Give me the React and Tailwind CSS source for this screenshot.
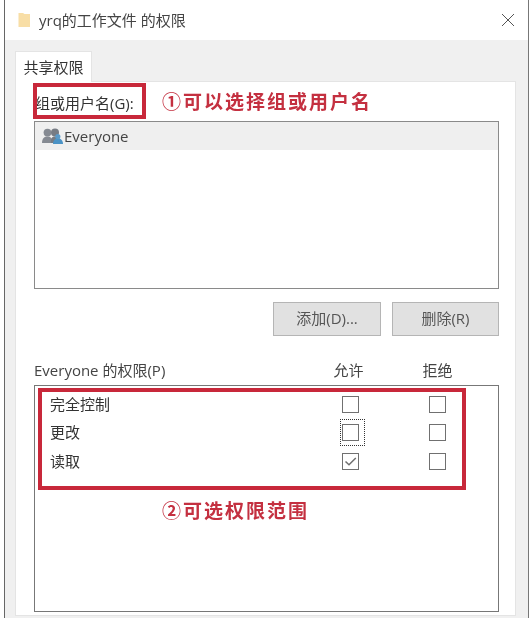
const font = { fontFamily: '"Open Sans", "Noto Sans CJK SC", sans-serif' };

function Box({ checked, focus }) {
  return (
    <div className="relative w-[17px] h-[17px] border border-[#707070] bg-white flex items-center justify-center">
      {focus && <div className="absolute left-[-3px] top-[-6px] w-[25px] h-[27px] border border-dotted border-[#333]" />}
      {checked && (
        <svg width="13" height="11" viewBox="0 0 13 11" fill="none">
          <path d="M1.5 5.5 L5 8.8 L11.8 2" stroke="#6f6f6f" strokeWidth="1.5" />
        </svg>
      )}
    </div>
  );
}

function Row({ label, allow, focus }) {
  return (
    <div className="h-[28.5px] flex items-center">
      <div className="w-[272px] pl-[15px] -mt-px text-[15px] text-[#333]">{label}</div>
      <div className="w-[87px] flex justify-center">
        <Box checked={allow} focus={focus} />
      </div>
      <div className="w-[87px] flex justify-center">
        <Box />
      </div>
    </div>
  );
}

function Users() {
  return (
    <svg width="21" height="17" viewBox="0 0 21 17">
      <circle cx="5.5" cy="4.6" r="3.9" fill="#858a92" />
      <path d="M0 15 C0 10 2.5 8.5 5.5 8.5 C8.5 8.5 10.5 10 10.5 15 Z" fill="#858a92" />
      <circle cx="13" cy="4.4" r="4" fill="#777c84" />
      <path d="M9 13 C9 9.5 10.5 8.5 13 8.5 C15 8.5 17 9.5 18 11 L12 15 L9 15 Z" fill="#777c84" />
      <path d="M11 16 C11 12.5 13 10.5 16 10.5 C19 10.5 21 12.5 21 16 Z" fill="#4b93c6" />
      <circle cx="15.8" cy="8.5" r="2.6" fill="#5a9ac8" />
    </svg>
  );
}

export default function App() {
  return (
    <div style={font} className="relative w-[531px] h-[618px] bg-white overflow-hidden text-[#333] blur-[0.4px]">
      <div className="absolute inset-y-0 left-[4px] w-px bg-[#666]" />
      <div className="absolute inset-y-0 left-[528px] w-px bg-[#777]" />

      <div className="ml-[5px] mr-[3px] h-full flex flex-col">
        <header className="h-[40px] shrink-0 bg-white flex items-center pl-[13px] pr-[13px]">
          <svg width="12" height="15" viewBox="0 0 12 15" className="mt-[-1px]">
            <path d="M0.5 1 H5 L6.5 2 H12 V15 H0.5 Z" fill="#f8dea6" />
          </svg>
          <span className="ml-[9px] text-[15px] text-[#444] leading-[20px]">yrq的工作文件 的权限</span>
          <svg width="14" height="14" viewBox="0 0 14 14" className="ml-auto">
            <path d="M1 1 L13 13 M13 1 L1 13" stroke="#555" strokeWidth="1" />
          </svg>
        </header>

        <div className="flex-1 bg-[#f0f0f0] pl-[10px] pr-[12px] pt-[11px]">
          <div className="w-[77px] h-[31px] bg-white border border-[#e4e4e4] border-b-0 flex items-center justify-center text-[15px] relative z-10 -mb-px">
            共享权限
          </div>
          <div className="bg-white border border-[#e4e4e4] h-[535px] pl-[18px] pr-[16px] flex flex-col">
            <div className="h-[39px] pt-[8px] pl-[1px] text-[15px] leading-[26px] whitespace-nowrap">组或用户名(G):</div>
            <div className="h-[168px] border border-[#8a8a8a] bg-white">
              <div className="h-[28px] bg-[#efefef] flex items-center pl-[7px] text-[15px]">
                <Users />
                <span className="ml-[1px] text-[#444]">Everyone</span>
              </div>
            </div>
            <div className="mt-[13px] flex justify-end gap-[11px]">
              <button className="w-[108px] h-[34px] pb-px bg-[#e1e1e1] border border-[#b5b5b5] text-[15px] text-[#555]">添加(D)...</button>
              <button className="w-[107px] h-[34px] pb-px bg-[#e1e1e1] border border-[#b5b5b5] text-[15px] text-[#555]">删除(R)</button>
            </div>
            <div className="mt-[21px] mb-px h-[27px] flex items-center text-[15px] text-[#444]">
              <span className="w-[299px] whitespace-nowrap">Everyone 的权限(P)</span>
              <span className="w-[31px] text-center whitespace-nowrap">允许</span>
              <span className="ml-[58px] w-[31px] text-center whitespace-nowrap">拒绝</span>
            </div>
            <div className="h-[227px] border border-[#777] bg-white pt-[4px]">
              <Row label="完全控制" />
              <Row label="更改" focus />
              <Row label="读取" allow />
            </div>
          </div>
        </div>
      </div>

      <div className="absolute left-[33px] top-[83px] w-[113px] h-[36px] border-[4px] border-[#c8283a]" />
      <div className="absolute left-[38px] top-[388px] w-[428px] h-[102px] border-[4px] border-[#c8283a]" />
      <div className="absolute left-[162px] top-[90px] text-[19px] font-bold leading-[24px] text-[#c43040] whitespace-nowrap tracking-[2px]">①可以选择组或用户名</div>
      <div className="absolute left-[162px] top-[499px] text-[19px] font-bold leading-[24px] text-[#c43040] whitespace-nowrap tracking-[2px]">②可选权限范围</div>
    </div>
  );
}
